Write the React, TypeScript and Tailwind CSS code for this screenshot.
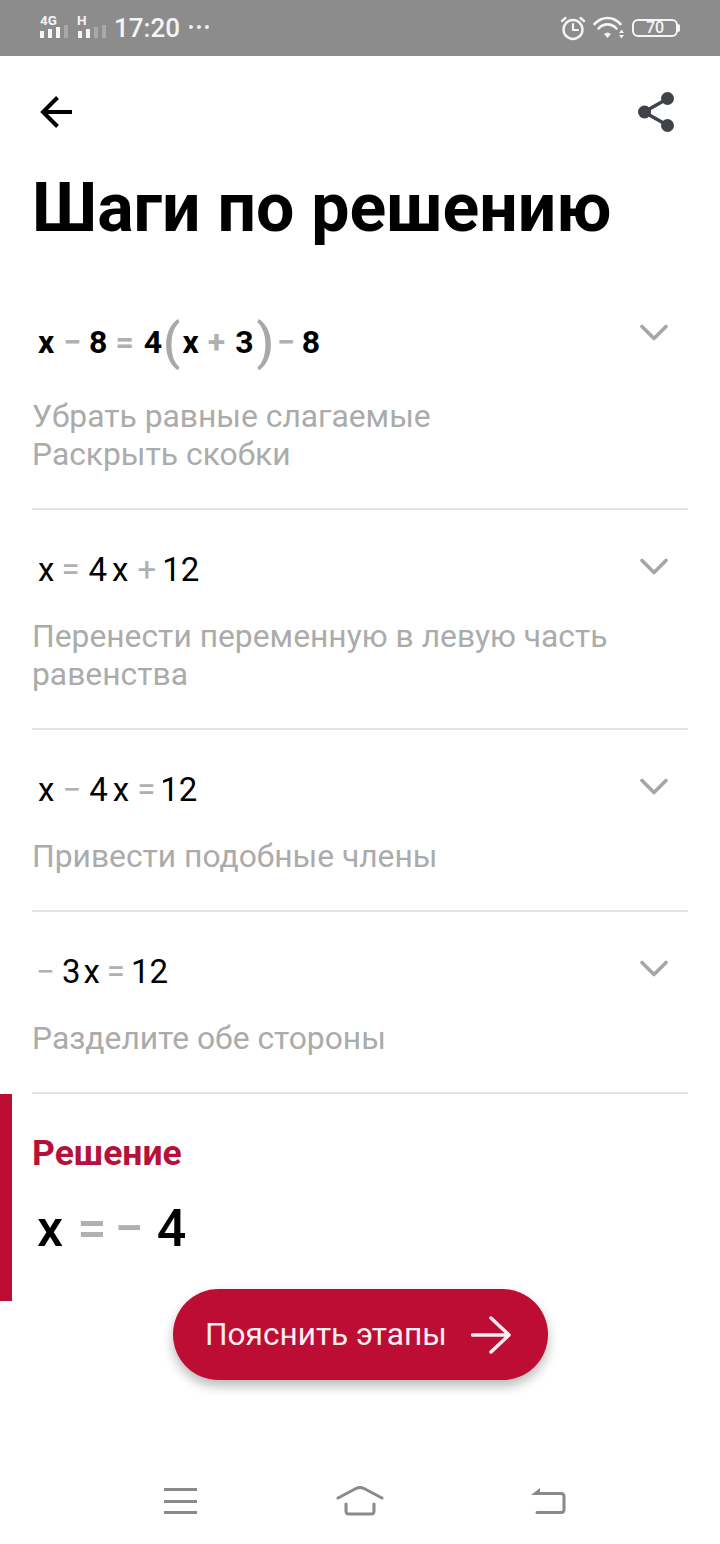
// App.tsx
const Minus = ({ className = "" }: { className?: string }) => (
  <span className={`text-[#b0b0b0] ${className}`}>−</span>
);
const Plus = ({ className = "" }: { className?: string }) => (
  <span className={`text-[#b0b0b0] ${className}`}>+</span>
);
const Eq = ({ className = "" }: { className?: string }) => (
  <span className={`text-[#b0b0b0] ${className}`}>=</span>
);

const Chevron = () => (
  <svg width="30" height="18" viewBox="0 0 30 18" fill="none" className="mt-[10px]">
    <path d="M3 2.500L15 14.500 27 2.500" stroke="#a6a6a6" strokeWidth="3.600" strokeLinecap="round" strokeLinejoin="round" />
  </svg>
);

const Bars = ({ lit }: { lit: number }) => (
  <div className="flex items-end gap-[4px] h-[13px] mt-[-1px]">
    {[7, 9, 11, 13].map((h, i) => (
      <div
        key={i}
        className={i < lit ? "w-[4px] bg-[#f5f5f5]" : "w-[4px] bg-[#a9a9a9]"}
        style={{ height: h }}
      />
    ))}
  </div>
);

const StatusBar = () => (
  <div className="h-[56px] bg-[#8c8c8c] flex items-center justify-between pl-[40px] pr-[40px] text-[#f5f5f5]">
    <div className="flex items-center">
      <div className="flex flex-col w-[38px] h-[24px] mt-[-4px]">
        <span className="text-[13.500px] leading-[12px] font-bold">4G</span>
        <Bars lit={3} />
      </div>
      <div className="flex flex-col w-[36px] h-[24px] mt-[-4px]">
        <span className="ml-[-1px] text-[13.500px] leading-[12px] font-bold">H</span>
        <Bars lit={2} />
      </div>
      <span className="text-[26px] leading-[32px] font-medium">17:20</span>
      <div className="flex gap-[4px] ml-[9px] mt-[-2px]">
        <div className="w-[4px] h-[4px] rounded-full bg-[#f0f0f0]" />
        <div className="w-[4px] h-[4px] rounded-full bg-[#f0f0f0]" />
        <div className="w-[4px] h-[4px] rounded-full bg-[#f0f0f0]" />
      </div>
    </div>
    <div className="flex items-center">
      <svg width="26" height="26" viewBox="0 0 26 26" fill="none" stroke="#f5f5f5" strokeLinecap="round" strokeLinejoin="round">
        <circle cx="13" cy="14.500" r="9.500" strokeWidth="2.400" />
        <path d="M13 9v6h5" strokeWidth="2.200" />
        <path d="M2 6l3.500-3M24 6l-3.500-3" strokeWidth="2.400" />
      </svg>
      <svg width="32" height="24" viewBox="0 0 32 24" fill="none" className="ml-[7px]">
        <path d="M1.500 8C9 0 20 0 27.500 8" stroke="#f5f5f5" strokeWidth="2.600" strokeLinecap="round" />
        <path d="M5.500 12.500C10.500 7 18.500 7 23.500 12.500" stroke="#f5f5f5" strokeWidth="2.600" strokeLinecap="round" />
        <path d="M11 18C13.500 16 15.500 16 18 18L14.500 22Z" fill="#f5f5f5" />
        <path d="M28.500 13.500l-2.500 3.500h5ZM28.500 22.500l-2.500-3.500h5Z" fill="#f5f5f5" />
      </svg>
      <div className="flex items-center ml-[7px]">
        <div className="w-[46px] h-[18px] rounded-[6px] border-2 border-[#f5f5f5] flex items-center justify-center">
          <span className="text-[16px] leading-[14px] font-medium">70</span>
        </div>
        <div className="w-[2px] h-[8px] bg-[#f5f5f5] rounded-r-[2px]" />
      </div>
    </div>
  </div>
);

const Header = () => (
  <div className="h-[112px] pl-[40px] pr-[45px] pt-[36px] flex items-start justify-between">
    <svg width="34" height="34" viewBox="0 0 34 34" fill="none" className="mt-[3px]">
      <path d="M32 17H4M17.500 2.500L3 17l14.500 14.500" stroke="#000" strokeWidth="4" />
    </svg>
    <svg width="38" height="42" viewBox="0 0 38 42" fill="none" className="mt-[-1px]">
      <path d="M7 21L30 8M7 21L30 34" stroke="#3f4347" strokeWidth="3.500" />
      <circle cx="7.500" cy="21" r="6.500" fill="#3f4347" />
      <circle cx="30.500" cy="7.500" r="6.500" fill="#3f4347" />
      <circle cx="30.500" cy="34.500" r="6.500" fill="#3f4347" />
    </svg>
  </div>
);

const Step = ({
  math,
  lines,
  bold = false,
}: {
  math: React.ReactNode;
  lines: string[];
  bold?: boolean;
}) => (
  <div className="mx-[32px] border-b-2 border-[#e2e2e2]">
    <div className="flex items-start justify-between pr-[19px]">
      <div
        className={
          bold
            ? "h-[56px] pl-[6px] flex items-center text-[32px] leading-[40px] font-bold text-black"
            : "h-[44px] pl-[6px] flex items-center text-[33px] leading-[40px] text-black"
        }
      >
        {math}
      </div>
      <Chevron />
    </div>
    <div className={bold ? "mt-[27px] pb-[35px]" : "mt-[25px] pb-[35px]"}>
      {lines.map((l) => (
        <div key={l} className="text-[31.800px] leading-[38px] text-[#ababab]">
          {l}
        </div>
      ))}
    </div>
  </div>
);

export default function App() {
  return (
    <div className="w-[720px] h-[1544px] bg-white flex flex-col overflow-hidden font-['Roboto',sans-serif]">
      <StatusBar />
      <Header />

      <h1 className="pl-[32px] text-[68px] leading-[80px] font-bold text-black">Шаги по решению</h1>

      <div className="pt-[66px]">
        <Step
          bold
          lines={["Убрать равные слагаемые", "Раскрыть скобки"]}
          math={
            <>
              <span>x</span>
              <Minus className="ml-[9px]" />
              <span className="ml-[8px]">8</span>
              <Eq className="ml-[8px]" />
              <span className="ml-[10px]">4</span>
              <span className="ml-[1px] text-[50px] font-medium text-[#a8a8a8]">(</span>
              <span className="ml-[2px]">x</span>
              <Plus className="ml-[9px]" />
              <span className="ml-[10px]">3</span>
              <span className="ml-[3px] text-[50px] font-medium text-[#a8a8a8]">)</span>
              <Minus className="ml-[3px]" />
              <span className="ml-[7px]">8</span>
            </>
          }
        />
        <div className="pt-[38px]">
          <Step
            lines={["Перенести переменную в левую часть", "равенства"]}
            math={
              <>
                <span>x</span>
                <Eq className="ml-[7px]" />
                <span className="ml-[9px]">4</span>
                <span className="ml-[5px]">x</span>
                <Plus className="ml-[9px]" />
                <span className="ml-[6px]">12</span>
              </>
            }
          />
        </div>
        <div className="pt-[38px]">
          <Step
            lines={["Привести подобные члены"]}
            math={
              <>
                <span>x</span>
                <Minus className="ml-[8px]" />
                <span className="ml-[8px]">4</span>
                <span className="ml-[5px]">x</span>
                <Eq className="ml-[8px]" />
                <span className="ml-[5px]">12</span>
              </>
            }
          />
        </div>
        <div className="pt-[38px]">
          <Step
            lines={["Разделите обе стороны"]}
            math={
              <>
                <Minus className="ml-[-2px]" />
                <span className="ml-[7px]">3</span>
                <span className="ml-[3px]">x</span>
                <Eq className="ml-[7px]" />
                <span className="ml-[6px]">12</span>
              </>
            }
          />
        </div>
      </div>

      {/* Solution */}
      <div className="flex h-[207px]">
        <div className="w-[12px] bg-[#bb0c33]" />
        <div className="pl-[20px] pt-[38px]">
          <div className="text-[35.500px] leading-[42px] font-bold text-[#b5113b]">Решение</div>
          <div className="mt-[25px] pl-[5px] flex items-center text-[52px] leading-[60px] font-medium text-black">
            <span>x</span>
            <Eq className="ml-[14px]" />
            <Minus className="ml-[8px]" />
            <span className="ml-[13px]">4</span>
          </div>
        </div>
      </div>

      <button className="self-center mt-[-12px] ml-[1px] w-[375px] h-[91px] rounded-full bg-[#bd0d34] shadow-[0_6px_12px_rgba(0,0,0,0.28)] flex items-center pl-[32px] text-[#fbeef1]">
        <span className="text-[31.600px] leading-[40px]">Пояснить этапы</span>
        <svg width="41" height="38" viewBox="0 0 41 38" fill="none" className="ml-[24px]">
          <path d="M1.500 19h36M20 2l18 17-18 17" stroke="#fbeef1" strokeWidth="3.500" strokeLinecap="round" strokeLinejoin="round" />
        </svg>
      </button>

      {/* System nav */}
      <div className="mt-[105px] flex items-center pl-[164px]">
        <div className="w-[33px] h-[26px] flex flex-col justify-between">
          <div className="h-[3px] bg-[#8a8a8a]" />
          <div className="h-[3px] bg-[#8a8a8a]" />
          <div className="h-[3px] bg-[#8a8a8a]" />
        </div>
        <svg width="48" height="32" viewBox="0 0 48 32" fill="none" className="ml-[139px]">
          <path d="M2 13L20 3.500Q24 1.500 28 3.500L46 13" stroke="#8a8a8a" strokeWidth="3" strokeLinecap="round" />
          <path d="M10 19v7q0 3 3 3h22q3 0 3-3v-7" stroke="#8a8a8a" strokeWidth="3" strokeLinecap="round" />
        </svg>
        <svg width="36" height="30" viewBox="0 0 36 30" fill="none" className="ml-[147px]">
          <path d="M5 7.500h25q3 0 3 3v13q0 3-3 3H6" stroke="#8a8a8a" strokeWidth="3" strokeLinecap="round" />
          <path d="M0 9L9 2v7Z" fill="#8a8a8a" />
        </svg>
      </div>
    </div>
  );
}
